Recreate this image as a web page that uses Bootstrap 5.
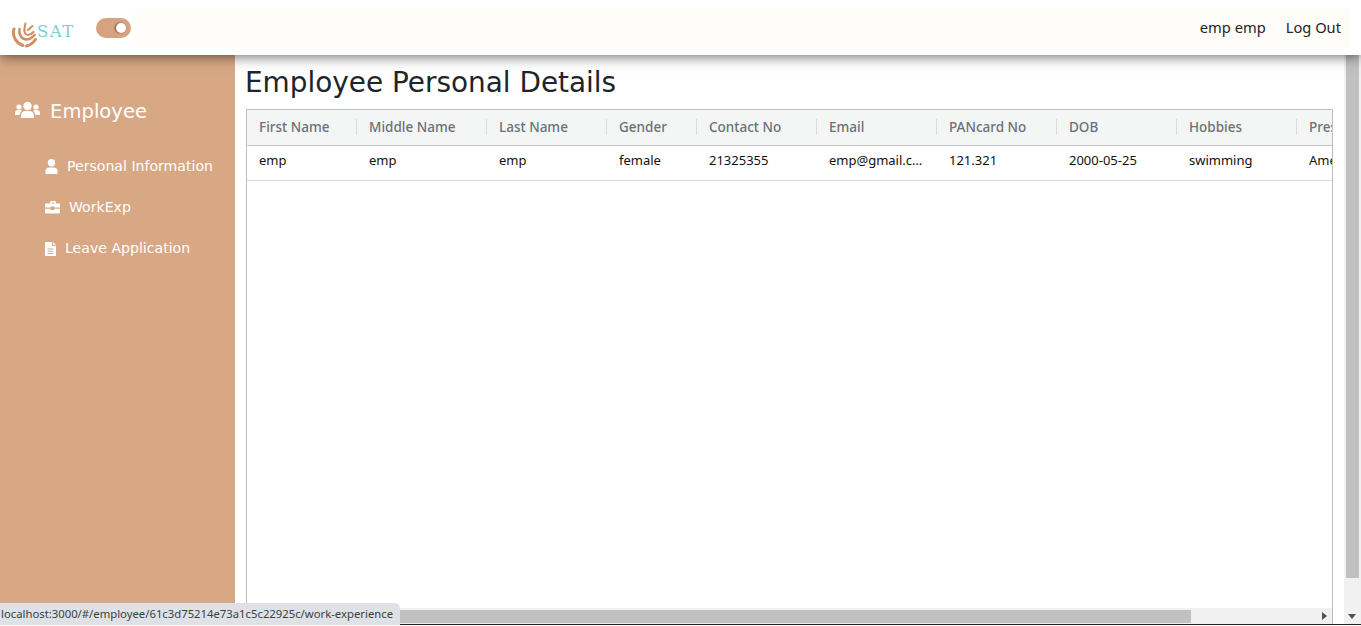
<!DOCTYPE html>
<html>
<head>
    <title>Employee Personal Details</title>
    <link href="https://cdn.jsdelivr.net/npm/bootstrap@5.3.0/dist/css/bootstrap.min.css" rel="stylesheet">
    <style>
        body { height: 626px; overflow: hidden; background: #fff; font-family: "Noto Sans", sans-serif; }
        .top-bar { height: 55px; padding: 0; background: #fff; box-shadow: 0 2px 12px rgba(0,0,0,.55); z-index: 5; flex-wrap: nowrap; }
        .brand-box { width: 96px; height: 55px; padding: 22px 0 0 12px; }
        .brand-sat { font-family: "DejaVu Serif", serif; font-size: 16.5px; line-height: 1; color: #7dd0d6; letter-spacing: 1.5px; margin-top: 2px; }
        .mode-switch { width: 35px; height: 20px; border-radius: 10px; background: #d6a27f; padding: 5px 5px 0 20px; flex-shrink: 0; }
        .mode-knob { display: block; width: 10px; height: 10px; border-radius: 50%; background: #fff; box-shadow: -1px 0 2px rgba(70,40,20,.7); }
        .top-inner { height: 41px; margin-right: 11px; padding-right: 9px; background: #fffdf9; font-size: 14.7px; color: #212529; gap: 20px; }
        .page-body { height: 570px; border-bottom: 1px solid #222; }
        .side-panel { width: 235px; background: #d8a885; color: #fff; font-family: "DejaVu Sans", sans-serif; flex-shrink: 0; }
        .side-head { font-size: 19.6px; height: 91px; padding: 42px 0 0 15px; gap: 10px; }
        .side-link { height: 41px; padding-left: 45px; font-size: 14.1px; }
        .side-link svg { flex-shrink: 0; }
        .main-pane { min-width: 0; padding: 0 11px 0 11px; }
        .page-title { font-family: "DejaVu Sans", sans-serif; font-size: 27.9px; font-weight: 400; line-height: 34px; margin: 11px 0 9px -1px; color: #212529; }
        .table-box { min-height: 0; border: 1px solid #bcc0c4; border-bottom: 0; overflow: hidden; }
        .data-grid { table-layout: fixed; width: 1170px; margin: 0; font-size: 13px; }
        .data-grid th { position: relative; height: 35px; padding: 0 12px 1px; font-size: 13.5px; font-weight: 500; color: #6c7074; background: #f4f6f6; border-bottom: 1px solid #c3c6c9; white-space: nowrap; vertical-align: middle; }
        .data-grid th + th::before { content: ""; position: absolute; left: -1px; top: 9px; height: 16px; border-left: 1px solid #d9dcdd; }
        .data-grid td { height: 35px; padding: 0 12px 3px; color: #111; border-bottom: 1px solid #d8dadb; white-space: nowrap; overflow: hidden; text-overflow: ellipsis; vertical-align: middle; }
        .h-track { height: 16px; background: #f1f1f1; flex-shrink: 0; margin: 0 -1px 0 0; }
        .h-thumb { width: 944px; height: 13px; background: #c1c1c1; }
        .h-arrow { margin-right: 6px; width: 0; height: 0; border-left: 5px solid #505050; border-top: 4px solid transparent; border-bottom: 4px solid transparent; }
        .v-track { width: 17px; background: #f1f1f1; flex-shrink: 0; padding-left: 2px; }
        .v-thumb { width: 13px; height: 523px; background: #c1c1c1; }
        .v-arrow { width: 0; height: 0; margin: 0 0 5px 2px; border-top: 5px solid #505050; border-left: 4px solid transparent; border-right: 4px solid transparent; }
        .link-status { position: absolute; left: 0; bottom: 1px; height: 22px; width: 400px; padding: 3px 0 0 1px; background: #dee1e6; border-top-right-radius: 5px; font-size: 11.3px; color: #3c4043; white-space: nowrap; z-index: 10; }
    </style>
</head>
<body class="position-relative">
    <nav class="navbar top-bar position-relative d-flex align-items-center">
        <div class="brand-box d-flex align-items-start">
            <svg width="25" height="26" viewBox="0 0 25 26" fill="none" stroke="#cf8f63" stroke-linecap="round">
                <path d="M2 7 C0 14 4 21 11 23.500" stroke-width="3"/>
                <path d="M14.500 24 C18 23.500 21 21 23.500 17.500" stroke-width="3"/>
                <path d="M7.500 7 C6.500 12 9 17 14 17.500 C17 17.500 20 16 22.500 13" stroke-width="2.600"/>
                <path d="M12.500 7 C12 10 13 13 16 13 C18 13 20 11.500 21.500 10" stroke-width="2.200"/>
                <path d="M13.500 1.500 L12.500 6" stroke-width="2"/>
                <path d="M20.500 4 L16 8" stroke-width="2"/>
            </svg>
            <span class="brand-sat">SAT</span>
        </div>
        <div class="mode-switch"><span class="mode-knob"></span></div>
        <div class="top-inner flex-grow-1 d-flex align-items-center justify-content-end">
            <span>emp emp</span>
            <span>Log Out</span>
        </div>
    </nav>

    <div class="page-body d-flex">
        <aside class="side-panel">
            <div class="side-head d-flex align-items-start">
                <svg class="mt-1" width="25" height="18" viewBox="0 0 25 18" fill="#fff">
                    <circle cx="12.500" cy="5" r="4.200"/>
                    <circle cx="4" cy="6" r="2.600"/>
                    <circle cx="21" cy="6" r="2.600"/>
                    <path d="M6 17 v-2.500 C6 11.500 8.500 10 10.500 10 h4 C16.500 10 19 11.500 19 14.500 V17 Z"/>
                    <path d="M0 14 v-2 C0 10 1.500 9 3 9 h2 C5.500 9 6.500 9.500 7 10 C5.500 11 4.700 12.500 4.500 14 Z"/>
                    <path d="M25 14 v-2 C25 10 23.500 9 22 9 h-2 C19.500 9 18.500 9.500 18 10 C19.500 11 20.300 12.500 20.500 14 Z"/>
                </svg>
                <span>Employee</span>
            </div>
            <div class="side-link d-flex align-items-center">
                <svg class="me-2" width="14" height="15" viewBox="0 0 14 15" fill="#fff">
                    <circle cx="6.500" cy="3.700" r="3.700"/>
                    <path d="M0.500 15 V12 C0.500 9.800 2 8.500 4 8.500 H9 C11 8.500 12.500 9.800 12.500 12 V15 Z"/>
                </svg>
                <span>Personal Information</span>
            </div>
            <div class="side-link d-flex align-items-center">
                <svg class="me-2" width="16" height="13" viewBox="0 0 16 13" fill="#fff">
                    <path d="M5 2.500 V1.500 C5 .7 5.600 0 6.500 0 H9.500 C10.400 0 11 .7 11 1.500 V2.500 H14.500 C15 2.500 15 3 15 3.500 V6.500 H9.500 V5.500 H5.500 V6.500 H0 V3.500 C0 3 .5 2.500 1 2.500 Z M6.500 1.500 V2.500 H9.500 V1.500 Z"/>
                    <path d="M0 7.800 H5.500 V9 H9.500 V7.800 H15 V11.500 C15 12 14.500 12.500 14 12.500 H1 C.5 12.500 0 12 0 11.500 Z"/>
                </svg>
                <span>WorkExp</span>
            </div>
            <div class="side-link d-flex align-items-center">
                <svg class="me-2" width="12" height="14" viewBox="0 0 12 14" fill="#fff">
                    <path fill-rule="evenodd" d="M0 0 H7 V4 H11 V14 H0 Z M2.500 6.500 V7.500 H8.500 V6.500 Z M2.500 8.700 V9.700 H8.500 V8.700 Z M2.500 10.900 V11.900 H8.500 V10.900 Z"/>
                    <path d="M8 0 L11 3 H8 Z"/>
                </svg>
                <span>Leave Application</span>
            </div>
        </aside>

        <main class="main-pane flex-grow-1 d-flex flex-column">
            <h1 class="page-title">Employee Personal Details</h1>
            <div class="table-box flex-grow-1 d-flex flex-column">
                <div class="flex-grow-1 overflow-hidden">
                    <table class="table data-grid">
                        <colgroup>
                            <col width="110"><col width="130"><col width="120"><col width="90"><col width="120"><col width="120"><col width="120"><col width="120"><col width="120"><col width="120">
                        </colgroup>
                        <thead>
                            <tr>
                                <th>First Name</th><th>Middle Name</th><th>Last Name</th><th>Gender</th><th>Contact No</th><th>Email</th><th>PANcard No</th><th>DOB</th><th>Hobbies</th><th>Present Address</th>
                            </tr>
                        </thead>
                        <tbody>
                            <tr>
                                <td>emp</td><td>emp</td><td>emp</td><td>female</td><td>21325355</td><td>emp@gmail.com</td><td>121.321</td><td>2000-05-25</td><td>swimming</td><td>Amedabad</td>
                            </tr>
                        </tbody>
                    </table>
                </div>
                <div class="h-track d-flex align-items-center justify-content-between">
                    <div class="h-thumb"></div>
                    <div class="h-arrow"></div>
                </div>
            </div>
        </main>

        <div class="v-track d-flex flex-column justify-content-between">
            <div class="v-thumb"></div>
            <div class="v-arrow"></div>
        </div>
    </div>

    <div class="link-status">localhost:3000/#/employee/61c3d75214e73a1c5c22925c/work-experience</div>

    <script src="https://cdn.jsdelivr.net/npm/bootstrap@5.3.0/dist/js/bootstrap.bundle.min.js"></script>
</body>
</html>
